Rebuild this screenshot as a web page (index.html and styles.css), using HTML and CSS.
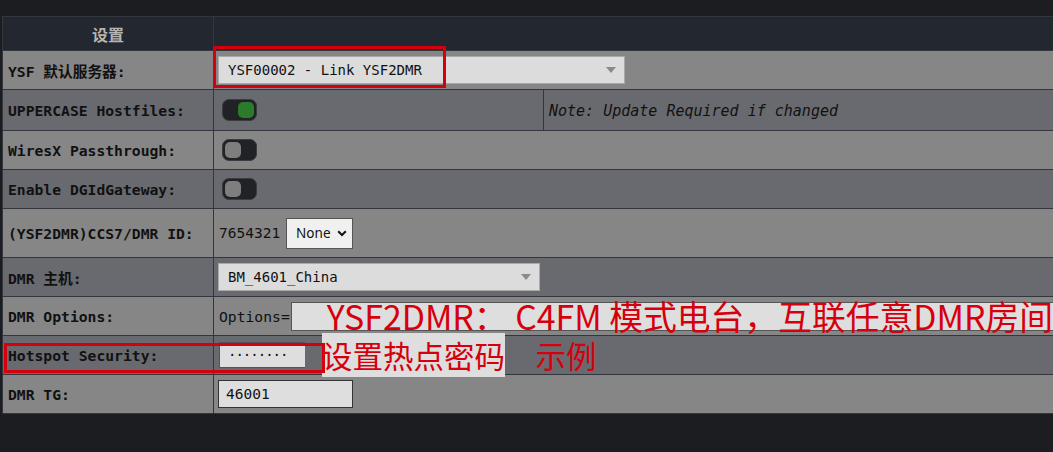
FILE: index.html
```html
<!DOCTYPE html>
<html lang="zh-CN">
<head>
<meta charset="utf-8">
<title>设置</title>
<link rel="stylesheet" href="styles.css">
</head>
<body>
<div class="wrap">
<table class="cfg">
  <colgroup><col class="c1"><col class="c2"><col class="c3"></colgroup>
  <tr class="head"><th>设置</th><th colspan="2"></th></tr>
  <tr class="lt">
    <td class="lbl">YSF 默认服务器:</td>
    <td colspan="2"><div class="sel sel-wide"><span>YSF00002 - Link YSF2DMR</span><i class="arr"></i></div></td>
  </tr>
  <tr class="dk">
    <td class="lbl">UPPERCASE Hostfiles:</td>
    <td><span class="tog on"><b></b></span></td>
    <td class="note">Note: Update Required if changed</td>
  </tr>
  <tr class="lt">
    <td class="lbl">WiresX Passthrough:</td>
    <td colspan="2"><span class="tog"><b></b></span></td>
  </tr>
  <tr class="dk">
    <td class="lbl">Enable DGIdGateway:</td>
    <td colspan="2"><span class="tog"><b></b></span></td>
  </tr>
  <tr class="lt tall">
    <td class="lbl">(YSF2DMR)CCS7/DMR ID:</td>
    <td colspan="2"><div class="idrow"><span class="val">7654321</span><span class="none">None<svg width="10" height="7" viewBox="0 0 10 7"><path d="M1.2 1.2 L5 5 L8.8 1.2" fill="none" stroke="#111" stroke-width="2"/></svg></span></div></td>
  </tr>
  <tr class="dk">
    <td class="lbl">DMR 主机:</td>
    <td colspan="2"><div class="sel sel-mid"><span>BM_4601_China</span><i class="arr"></i></div></td>
  </tr>
  <tr class="lt">
    <td class="lbl">DMR Options:</td>
    <td colspan="2"><div class="optrow"><span class="opt">Options=</span><span class="optbox"><span class="ann ann1">YSF2DMR： C4FM 模式电台，互联任意DMR房间</span></span></div></td>
  </tr>
  <tr class="dk">
    <td class="lbl">Hotspot Security:</td>
    <td colspan="2"><div class="pwrow"><span class="pw">········</span><span class="ann ann2"><span class="hl">设置热点密码</span>　示例</span></div></td>
  </tr>
  <tr class="lt">
    <td class="lbl">DMR TG:</td>
    <td colspan="2"><span class="tg">46001</span></td>
  </tr>
</table>
<div class="redbox rb1"></div>
<div class="redbox rb2"></div>
</div>
</body>
</html>
```

FILE: styles.css
```css
html, body { margin: 0; padding: 0; overflow: hidden; }
body {
  background: #1c1d21;
  width: 1053px;
  height: 452px;
  font-family: "DejaVu Sans Mono", "Liberation Mono", monospace;
}
.wrap { position: relative; padding: 16px 0 0 2px; }
.cfg {
  border-collapse: collapse;
  width: 1120px;
  table-layout: fixed;
}
.c1 { width: 211px; }
.c2 { width: 330px; }
.cfg th, .cfg td {
  border: 1px solid #33363d;
  padding: 0;
}
.head th {
  background: #23272f;
  height: 33px;
  color: #b5b5b5;
  font-family: "Noto Sans CJK SC", sans-serif;
  font-size: 16px;
  font-weight: bold;
}
.lt td { background: #868686; height: 38px; }
.dk td { background: #696a6f; height: 38px; }
.tall td { height: 48px; }
.lbl {
  padding-left: 5px !important;
  font-weight: bold;
  font-size: 14.7px;
  color: #111;
  white-space: nowrap;
  font-family: "DejaVu Sans Mono", "Noto Sans CJK SC", monospace;
}
.cfg td + td { padding-left: 4px; }
.sel {
  display: flex;
  align-items: center;
  justify-content: space-between;
  height: 28px;
  background: #dcdcdc;
  border: 1px solid #a9a9a9;
  box-sizing: border-box;
  padding: 0 8px 0 9px;
  font-size: 14px;
  color: #111;
}
.sel-wide { width: 407px; }
.sel-mid { width: 322px; }
.arr {
  width: 0; height: 0;
  border-left: 5px solid transparent;
  border-right: 5px solid transparent;
  border-top: 6px solid #8a8a8a;
}
.tog {
  display: block;
  margin-left: 4px;
  width: 35px; height: 22px;
  box-sizing: border-box;
  border-radius: 7px;
  background: #212226;
  border: 1px solid #3b3c40;
  position: relative;
}
.tog b {
  position: absolute;
  left: 2px; top: 2px;
  width: 16px; height: 16px;
  border-radius: 5px;
  background: #7e7e7e;
}
.tog.on b { left: auto; right: 2px; background: #2b7b2a; }
.note {
  padding-left: 5px !important;
  padding-top: 2px !important;
  font-style: italic;
  font-size: 15px;
  color: #111;
}
.idrow { display: flex; align-items: center; gap: 6px; padding-left: 1px; }
.val { font-size: 14.5px; color: #111; }
.none {
  display: inline-flex;
  align-items: center;
  gap: 6px;
  height: 31px;
  box-sizing: border-box;
  padding: 0 5px 0 9px;
  background: #f0f0f0;
  border: 1px solid #555;
  font-family: "Noto Sans", sans-serif;
  font-size: 13.5px;
  color: #111;
}
.optrow { display: flex; align-items: center; padding-left: 1px; }
.opt { font-size: 14.7px; color: #111; font-family: "DejaVu Sans Mono", monospace; }
.optbox {
  display: flex;
  align-items: center;
  height: 29px;
  width: 800px;
  box-sizing: border-box;
  margin-left: 1px;
  background: #dedede;
  border: 1px solid #555;
  overflow: visible;
}
.ann {
  color: #d6000c;
  font-family: "Noto Sans CJK SC", sans-serif;
  white-space: nowrap;
  line-height: 1;
}
.ann1 { font-size: 33.8px; margin-left: 35px; }
.pwrow { display: flex; align-items: center; padding-left: 1px; }
.pw {
  display: block;
  width: 86px;
  height: 26px;
  line-height: 24px;
  box-sizing: border-box;
  padding-left: 8px;
  background: #dedede;
  border: 1px solid #555;
  border-right: 0;
  font-size: 14px;
  color: #111;
  letter-spacing: -1px;
}
.ann2 { font-size: 30.5px; margin-left: 17px; }
.hl { background: #dedede; }
.tg {
  display: block;
  width: 135px;
  height: 28px;
  line-height: 26px;
  box-sizing: border-box;
  padding-left: 7px;
  background: #dedede;
  border: 1px solid #333;
  font-size: 14.5px;
  color: #111;
}
.redbox {
  position: absolute;
  border: 3px solid #d4000e;
  box-sizing: border-box;
}
.rb1 { left: 213px; top: 46px; width: 233px; height: 42px; }
.rb2 { left: 4px; top: 343px; width: 321px; height: 30px; }
```
